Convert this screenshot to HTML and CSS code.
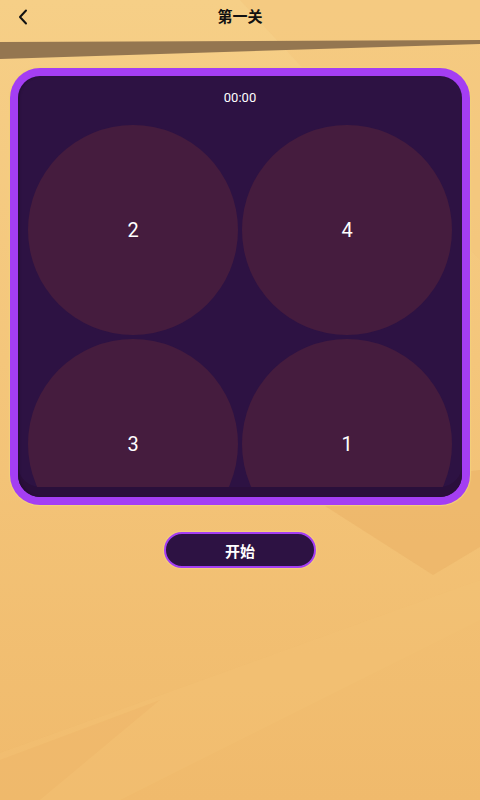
FILE: index.html
```html
<!DOCTYPE html>
<html>
<head>
<meta charset="utf-8">
<link rel="stylesheet" href="styles.css">
</head>
<body>
<div class="page">
  <svg class="bg" width="480" height="800" viewBox="0 0 480 800">
    <polygon points="240,0 480,0 480,260" fill="#f3c67c" opacity="0.5"/>
    <polygon points="300,490 433,575 480,547 480,470" fill="#e9b064" opacity="0.5"/>
    <polygon points="0,753 480,580 480,620 120,800 0,800" fill="#f4c275" opacity="0.35"/>
    <polygon points="0,800 0,760 160,700 40,800" fill="#eab064" opacity="0.3"/>
    <polygon points="0,42 480,40 480,44 0,59" fill="#947650"/>
  </svg>
  <header class="topbar">
    <svg class="back" width="12" height="16" viewBox="0 0 12 16">
      <path d="M9 1.5 L3 8 L9 14.5" fill="none" stroke="#111" stroke-width="2" stroke-linecap="round" stroke-linejoin="round"/>
    </svg>
    <h1 class="title">第一关</h1>
  </header>
  <main class="content">
    <section class="board">
      <div class="board-inner">
        <div class="timer">00:00</div>
        <div class="grid-wrap">
          <div class="grid">
            <div class="cell">2</div>
            <div class="cell">4</div>
            <div class="cell">3</div>
            <div class="cell">1</div>
          </div>
        </div>
      </div>
    </section>
    <button class="start">开始</button>
  </main>
</div>
</body>
</html>
```
FILE: styles.css
```css
* { box-sizing: border-box; }
html, body { margin: 0; padding: 0; }
body {
  width: 480px;
  height: 800px;
  overflow: hidden;
  font-family: Roboto, "Noto Sans CJK SC", sans-serif;
}
.page {
  position: relative;
  width: 480px;
  height: 800px;
  background: linear-gradient(180deg, #f6cf87 0%, #f4c67b 45%, #f0ba6c 100%);
}
.bg {
  position: absolute;
  left: 0;
  top: 0;
}
.topbar {
  position: relative;
  height: 40px;
  display: flex;
  align-items: center;
  justify-content: center;
}
.back {
  position: absolute;
  left: 17px;
  top: 9px;
}
.title {
  margin: 0;
  font-size: 15px;
  font-weight: 700;
  color: #111;
  line-height: 1;
  margin-top: -6px;
}
.content {
  position: relative;
  padding: 28px 10px 0;
  display: flex;
  flex-direction: column;
  align-items: center;
}
.board {
  width: 460px;
  height: 437px;
  background: #a43ef3;
  border-radius: 30px;
  padding: 8px;
  box-shadow: 0 0 1px 1px #f3d07a;
}
.board-inner {
  height: 100%;
  background: #2d1243;
  border-radius: 22px;
  padding: 10px 10px 10px;
  display: flex;
  flex-direction: column;
  box-shadow: inset 2px 0 2px rgba(0,0,0,0.15), inset 0 -10px 0 #2a0f3b;
}
.timer {
  text-align: center;
  color: #fff;
  font-size: 13px;
  line-height: 24px;
  height: 39px;
}
.grid-wrap {
  flex: 1;
  overflow: hidden;
}
.grid {
  display: grid;
  grid-template-columns: 210px 210px;
  gap: 4px;
}
.cell {
  width: 210px;
  height: 210px;
  border-radius: 50%;
  background: #451c3e;
  color: #fff;
  font-size: 20px;
  display: flex;
  align-items: center;
  justify-content: center;
}
.start {
  margin-top: 27px;
  width: 152px;
  height: 36px;
  border-radius: 18px;
  border: 2px solid #a43ef3;
  background: #2d1243;
  color: #fff;
  font-family: "Noto Sans CJK SC", sans-serif;
  font-weight: 700;
  font-size: 15px;
  box-shadow: 0 0 1px 1px #f3d07a;
  padding: 0;
}
```
